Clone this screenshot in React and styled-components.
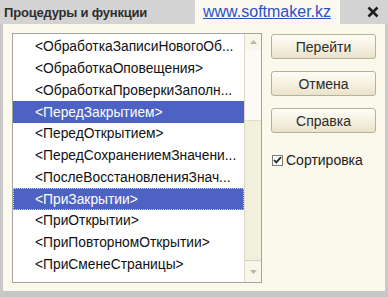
import React from 'react';
import styled, { createGlobalStyle } from 'styled-components';

const items = [
  { name: '<ОбработкаЗаписиНовогоОб...' },
  { name: '<ОбработкаОповещения>' },
  { name: '<ОбработкаПроверкиЗаполн...' },
  { name: '<ПередЗакрытием>', selected: true },
  { name: '<ПередОткрытием>' },
  { name: '<ПередСохранениемЗначени...' },
  { name: '<ПослеВосстановленияЗнач...' },
  { name: '<ПриЗакрытии>', selected: true, focused: true },
  { name: '<ПриОткрытии>' },
  { name: '<ПриПовторномОткрытии>' },
  { name: '<ПриСменеСтраницы>' },
];

const GlobalStyle = createGlobalStyle`
  body {
    margin: 0;
    background: #fff;
    font-family: "Liberation Sans", Arial, sans-serif;
  }
`;

const Window = styled.div`
  width: 388px;
  height: 297px;
  display: flex;
  flex-direction: column;
  overflow: hidden;
`;

const TitleBar = styled.div`
  display: flex;
  height: 24px;
  flex-shrink: 0;
`;

const Caption = styled.div`
  width: 195px;
  box-sizing: border-box;
  padding-left: 4px;
  display: flex;
  align-items: center;
  background: #d3d3d3;
  color: #2e2e2e;
  font-size: 13px;
  letter-spacing: -0.2px;
  font-weight: 700;
`;

const LinkTab = styled.div`
  width: 145px;
  box-sizing: border-box;
  padding-left: 8px;
  display: flex;
  align-items: center;
  background: #fcfaf0;

  a {
    color: #2b4fc6;
    font-size: 16px;
    text-decoration: underline;
  }
`;

const CloseZone = styled.div`
  flex: 1;
  display: flex;
  align-items: center;
  justify-content: flex-end;
  padding-right: 9px;
  background: #d3d3d3;
`;

const Body = styled.div`
  flex: 1;
  display: flex;
  gap: 9px;
  padding: 9px 9px 8px 9px;
  background: #fbf9ec;
  border-left: 3px solid #c9c9c9;
  border-right: 3px solid #c9c9c9;
  border-bottom: 6px solid #c6c6c6;
  min-height: 0;
`;

const ListBox = styled.div`
  width: 250px;
  box-sizing: border-box;
  display: flex;
  border: 1px solid #a4a4a4;
  background: #fff;
`;

const Rows = styled.div`
  flex: 1;
  padding-top: 2px;
`;

const Row = styled.div`
  height: 21.75px;
  box-sizing: border-box;
  display: flex;
  align-items: center;
  padding-left: 22px;
  font-size: 13.8px;
  white-space: nowrap;
  color: ${(p) => (p.$selected ? '#fff' : '#111')};
  background: ${(p) => (p.$selected ? '#4d62c3' : 'transparent')};
  outline: ${(p) => (p.$focused ? '1px dotted #c9d0f0' : 'none')};
  outline-offset: -1px;
`;

const ScrollBar = styled.div`
  width: 16px;
  display: flex;
  flex-direction: column;
  border-left: 1px solid #dcd7c4;
  background: #f3efdd;
`;

const ScrollButton = styled.div`
  height: ${(p) => p.$height}px;
  display: flex;
  align-items: center;
  justify-content: center;
  background: #f8f6ea;
  border-top: ${(p) => (p.$bottom ? '1px solid #d8d3bf' : 'none')};
`;

const Thumb = styled.div`
  height: 70px;
  background: #fbfaf4;
  border-bottom: 1px solid #e2ddc9;
`;

const Track = styled.div`
  flex: 1;
`;

const Side = styled.div`
  width: 105px;
  display: flex;
  flex-direction: column;
  gap: 12px;
  padding-top: 1px;
`;

const Button = styled.div`
  height: 25px;
  box-sizing: border-box;
  display: flex;
  align-items: center;
  justify-content: center;
  border: 1px solid #b7b199;
  border-radius: 3px;
  background: linear-gradient(#fefdf7, #f4f0df 55%, #e9e3cb);
  color: #2c2c2c;
  font-size: 14px;
`;

const CheckRow = styled.label`
  margin-top: 5px;
  height: 20px;
  display: flex;
  align-items: center;
  padding-left: 1px;
  color: #222;
  font-size: 14px;
`;

const CheckBox = styled.span`
  width: 11px;
  height: 11px;
  box-sizing: border-box;
  display: flex;
  align-items: center;
  justify-content: center;
  border: 1px solid #7c7c7c;
  background: #fff;
  margin-right: 3px;
`;

const Arrow = ({ down }) => (
  <svg width="7" height="4" viewBox="0 0 7 4">
    <path d={down ? 'M0 0h7L3.5 4z' : 'M0 4h7L3.5 0z'} fill="#b9b6a8" />
  </svg>
);

const App = () => {
  return (
    <Window>
      <GlobalStyle />
      <TitleBar>
        <Caption>Процедуры и функции</Caption>
        <LinkTab>
          <a href="#">www.softmaker.kz</a>
        </LinkTab>
        <CloseZone>
          <svg width="12" height="12" viewBox="0 0 12 12">
            <path d="M1.5 1.5l9 9M10.5 1.5l-9 9" stroke="#1f1f1f" strokeWidth="2.6" />
          </svg>
        </CloseZone>
      </TitleBar>
      <Body>
        <ListBox>
          <Rows>
            {items.map((item) => (
              <Row key={item.name} $selected={item.selected} $focused={item.focused}>
                {item.name}
              </Row>
            ))}
          </Rows>
          <ScrollBar>
            <ScrollButton $height={16}>
              <Arrow />
            </ScrollButton>
            <Thumb />
            <Track />
            <ScrollButton $height={21} $bottom>
              <Arrow down />
            </ScrollButton>
          </ScrollBar>
        </ListBox>
        <Side>
          <Button>Перейти</Button>
          <Button>Отмена</Button>
          <Button>Справка</Button>
          <CheckRow>
            <CheckBox>
              <svg width="9" height="8" viewBox="0 0 9 8">
                <path d="M1 4l2.3 2.4L8 1.2" stroke="#222" strokeWidth="1.8" fill="none" />
              </svg>
            </CheckBox>
            Сортировка
          </CheckRow>
        </Side>
      </Body>
    </Window>
  );
};

export default App;
